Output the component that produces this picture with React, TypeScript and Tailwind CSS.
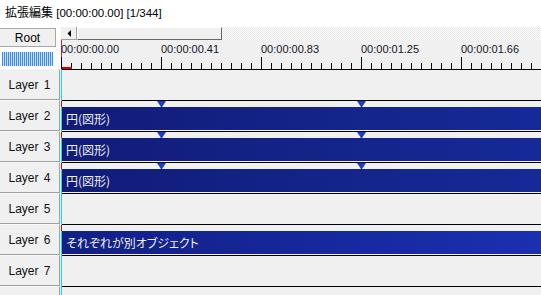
const rows: { name: string; label: boolean; bar?: string; marks?: boolean; alt?: boolean }[] = [
  { name: "Layer 1", label: true },
  { name: "Layer 2", label: true, bar: "円(図形)", marks: true },
  { name: "Layer 3", label: true, bar: "円(図形)", marks: true },
  { name: "Layer 4", label: true, bar: "円(図形)", marks: true },
  { name: "Layer 5", label: true },
  { name: "Layer 6", label: true, bar: "それぞれが別オブジェクト", alt: true },
  { name: "Layer 7", label: true },
  // only the top edge of layer 8 is in view
  { name: "Layer 8", label: false },
];

const labels = ["00:00:00.00", "00:00:00.41", "00:00:00.83", "00:00:01.25", "00:00:01.66"];

const Ruler = () => {
  const ticks = [];
  for (let i = 0; i < 48; i++) {
    const x = i * 10 + 0.5;
    const major = i % 10 === 0;
    ticks.push(<line key={i} x1={x} x2={x} y1={major ? 17 : 23} y2={29} stroke="#000" strokeWidth="1" />);
  }
  return (
    <svg className="absolute left-[-1px] top-0" width="480" height="29">
      {ticks}
      <line x1="0.5" x2="0.5" y1="0" y2="17" stroke="#e02020" />
      <rect x="1" y="27" width="10" height="2" fill="#e00000" />
    </svg>
  );
};

const Mark = ({ x }: { x: number }) => (
  <svg className="absolute top-0" style={{ left: x }} width="9" height="6">
    <polygon points="0,0 9,0 5,6 4,6" fill="#1c3acb" />
  </svg>
);

export default function App() {
  return (
    <div className="w-[541px] h-[295px] overflow-hidden bg-white flex flex-col font-['Liberation_Sans','Noto_Sans_CJK_JP',sans-serif] text-black">
      <div className="h-[27px] shrink-0 pl-[5px] pt-[4px] text-[11.5px] leading-[16px] whitespace-pre">
        <span className="text-[12px] font-['Noto_Sans_CJK_JP',sans-serif]">拡張編集</span> [00:00:00.00] [1/344]
      </div>
      <div className="flex flex-1">
        <div className="w-[61px] shrink-0 flex flex-col">
          <div className="h-[42px] bg-white pt-[1px]">
            <div className="h-[19px] w-[56px] bg-[#f0f0f0] border-t border-r border-b border-[#a8a8a8] flex items-center justify-center text-[12px] leading-none">
              Root
            </div>
            <div className="mt-[5px] ml-[2px] h-[14px] w-[51px] bg-[repeating-linear-gradient(90deg,#3c8cf0_0px,#3c8cf0_1px,#cfe2fc_1px,#cfe2fc_2px)]" />
          </div>
          {rows.map((r) => (
            <div key={r.name} className="h-[31px] shrink-0 w-[61px] bg-[#f7f7f7] border-r border-[#f0f0f0]">
              <div className="h-[31px] w-[60px] bg-[#f0f0f0] border-t border-[#f8f8f8] border-b border-r border-b-[#a0a0a0] border-r-[#a0a0a0] flex items-center justify-center text-[12px] text-[#111] [word-spacing:2px]">
                {r.label ? r.name : null}
              </div>
            </div>
          ))}
        </div>
        <div className="flex-1 flex flex-col bg-[#f0f0f0]">
          <div className="h-[13px] shrink-0 flex">
            <div className="w-[16px] bg-[#f0f0f0] border-r border-b border-[#a0a0a0] flex items-center justify-center">
              <svg width="4" height="7">
                <polygon points="4,0 4,7 0.5,3.5" fill="#000" />
              </svg>
            </div>
            <div className="w-[145px] bg-[#f0f0f0] border-t border-l border-white border-r border-b border-r-[#696969] border-b-[#696969]" />
            <div className="flex-1 bg-[repeating-conic-gradient(#e6e6e6_0_25%,#ffffff_0_50%)] bg-[length:2px_2px]" />
          </div>
          <div className="flex-1 flex flex-col border-l border-[#00e0e8]">
            <div className="h-[29px] shrink-0 relative">
              <Ruler />
              {labels.map((l, i) => (
                <span key={l} className="absolute top-[3px] text-[11px] leading-[13px] text-[#141428]" style={{ left: i * 100 - 1 }}>
                  {l}
                </span>
              ))}
            </div>
            {rows.map((r) => (
              <div key={r.name} className="h-[31px] shrink-0 border-t border-black relative">
                {r.bar && (
                  <>
                    <div className="absolute left-[-1px] top-0 w-px h-[6px] bg-[#e00000]" />
                    {r.marks && (
                      <>
                        <Mark x={95} />
                        <Mark x={295} />
                      </>
                    )}
                    <div
                      className={`mt-[6px] h-[23px] flex items-center pl-[4px] text-[12px] text-[#eeeef4] font-['Noto_Sans_CJK_JP',sans-serif] [font-feature-settings:'palt'] bg-gradient-to-r ${
                        r.alt ? "from-[#121f84] to-[#1a30b2]" : "from-[#111c78] to-[#152a98]"
                      }`}
                    >
                      {r.bar}
                    </div>
                  </>
                )}
              </div>
            ))}
          </div>
        </div>
      </div>
    </div>
  );
}
